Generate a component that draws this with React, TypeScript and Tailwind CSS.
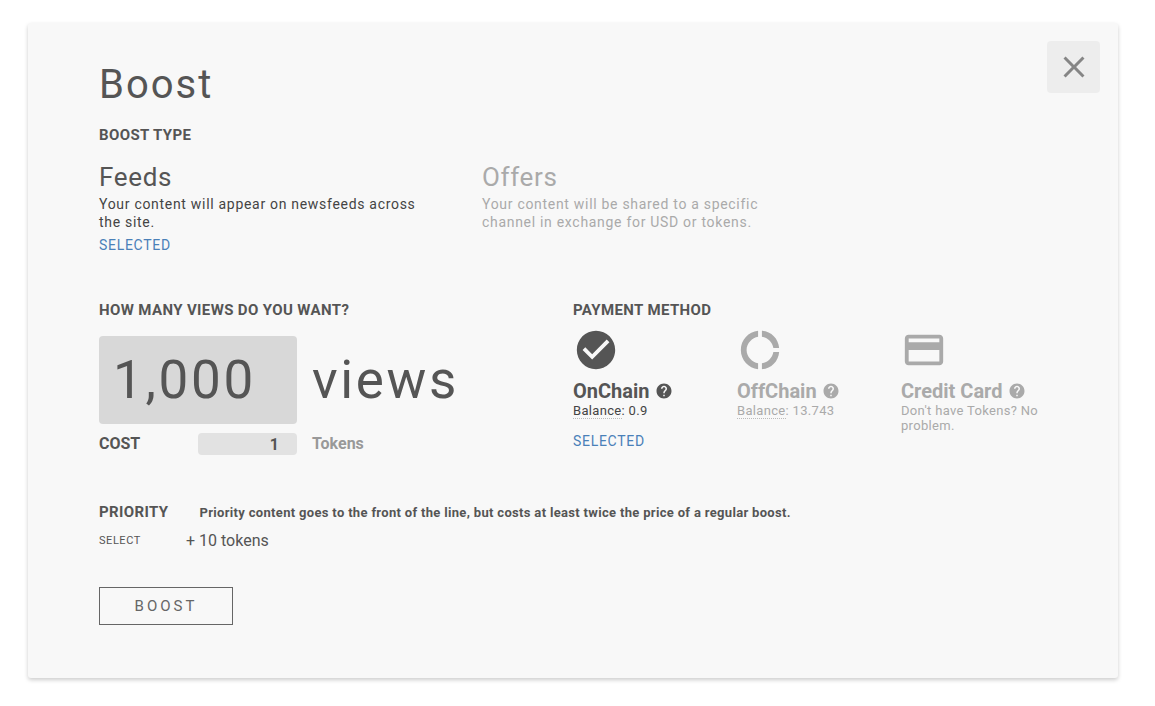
import { useState } from "react";
import type { ReactNode } from "react";
import { MdCheckCircle, MdClose, MdCreditCard, MdDonutLarge, MdHelp } from "react-icons/md";

function SectionTitle({ children }: { children: ReactNode }) {
  return <h2 className="text-[15px] leading-5 font-bold tracking-wide">{children}</h2>;
}

function SelectedMark({ className }: { className: string }) {
  return (
    <span className={`block text-sm leading-[18px] tracking-wider text-[#4a80b8] ${className}`}>
      SELECTED
    </span>
  );
}

const boostTypes = [
  { id: "feeds", name: "Feeds", text: "Your content will appear on newsfeeds across the site." },
  {
    id: "offers",
    name: "Offers",
    text: "Your content will be shared to a specific channel in exchange for USD or tokens.",
  },
];

const methods = [
  { id: "onchain", name: "OnChain", Icon: MdCheckCircle, balance: "0.9" },
  { id: "offchain", name: "OffChain", Icon: MdDonutLarge, balance: "13.743" },
  { id: "card", name: "Credit Card", Icon: MdCreditCard, balance: null },
];

export default function App() {
  const [type, setType] = useState("feeds");
  const [method, setMethod] = useState("onchain");
  const [views, setViews] = useState("1,000");
  const [cost, setCost] = useState("1");

  return (
    <main className="bg-white pt-[23px] pr-[37px] pb-7 pl-7 font-['Roboto',sans-serif] text-[#555]">
      <form
        onSubmit={(e) => e.preventDefault()}
        className="rounded-[3px] bg-[#f8f8f8] pt-[18px] pr-[18px] pb-[53px] pl-[71px] shadow-[0_2px_4px_rgba(0,0,0,0.2)]"
      >
        <header className="flex items-start justify-between">
          <h1 className="mt-5 text-[40px] leading-[48px] tracking-wider">Boost</h1>
          <button
            type="button"
            aria-label="Close"
            className="flex h-[52px] w-[53px] items-center justify-center rounded bg-[#ededed] text-[#858585]"
          >
            <MdClose className="size-9" />
          </button>
        </header>

        <div className="pr-[35px]">
          <section className="mt-4">
            <SectionTitle>BOOST TYPE</SectionTitle>
            <div className="mt-4 grid grid-cols-[383fr_383fr_200fr] items-start">
              {boostTypes.map((t) => (
                <button
                  key={t.id}
                  type="button"
                  aria-pressed={type === t.id}
                  onClick={() => setType(t.id)}
                  className={`pr-14 text-left ${type === t.id ? "text-[#444]" : "text-[#aaa]"}`}
                >
                  <span
                    className={`block text-[26px] leading-8 tracking-wide ${type === t.id ? "text-[#555]" : ""}`}
                  >
                    {t.name}
                  </span>
                  <span className="mt-0.5 block text-sm leading-[18px] tracking-wider">{t.text}</span>
                  {type === t.id && <SelectedMark className="mt-[5px]" />}
                </button>
              ))}
            </div>
          </section>

          <div className="mt-[46px] grid grid-cols-[474fr_492fr] items-start">
            <section>
              <SectionTitle>HOW MANY VIEWS DO YOU WANT?</SectionTitle>
              <div className="mt-4 flex items-center gap-[15px]">
                <input
                  id="views"
                  value={views}
                  onChange={(e) => setViews(e.target.value)}
                  className="h-[88px] w-[198px] rounded bg-[#d8d8d8] px-[14px] text-[53px] tracking-wider outline-none"
                />
                <label htmlFor="views" className="text-[53px] leading-[64px] tracking-wider">
                  views
                </label>
              </div>
              <div className="mt-[9px] flex items-center text-base leading-5 font-bold">
                <label htmlFor="cost" className="w-[99px]">
                  COST
                </label>
                <input
                  id="cost"
                  value={cost}
                  onChange={(e) => setCost(e.target.value)}
                  className="h-[22px] w-[99px] rounded bg-[#e2e2e2] pr-[18px] text-right outline-none"
                />
                <span className="ml-[15px] text-[#999]">Tokens</span>
              </div>
            </section>

            <section>
              <SectionTitle>PAYMENT METHOD</SectionTitle>
              <div className="mt-[7px] grid grid-cols-3 items-start">
                {methods.map(({ id, name, Icon, balance }) => (
                  <button
                    key={id}
                    type="button"
                    aria-pressed={method === id}
                    onClick={() => setMethod(id)}
                    className={`pr-4 text-left ${method === id ? "text-[#555]" : "text-[#aaa]"}`}
                  >
                    <Icon className="size-[46px]" />
                    <span className="mt-1.5 flex items-center gap-[5px] text-xl leading-6 font-bold">
                      {name}
                      <MdHelp className="size-[18px]" />
                    </span>
                    <span
                      className={`block text-[13px] leading-[15px] tracking-wide ${method === id ? "text-[#444]" : ""}`}
                    >
                      {balance ? (
                        <>
                          <span className="border-b border-dotted border-[#bbb]">Balance</span>: {balance}
                        </>
                      ) : (
                        "Don't have Tokens? No problem."
                      )}
                    </span>
                    {method === id && <SelectedMark className="mt-[14px]" />}
                  </button>
                ))}
              </div>
            </section>
          </div>

          <section className="mt-[47px]">
            <div className="flex items-baseline gap-[31px]">
              <SectionTitle>PRIORITY</SectionTitle>
              <p className="text-[13px] leading-5 font-bold tracking-wide">
                Priority content goes to the front of the line, but costs at least twice the price of a
                regular boost.
              </p>
            </div>
            <div className="mt-2 flex items-center">
              <button type="button" className="w-[87px] text-left text-[11px] leading-5 tracking-wider">
                SELECT
              </button>
              <span className="text-base leading-5">+ 10 tokens</span>
            </div>
          </section>

          <button
            type="submit"
            className="mt-9 block h-[38px] w-[134px] border border-[#666] text-[15px] tracking-[0.2em] text-[#666]"
          >
            BOOST
          </button>
        </div>
      </form>
    </main>
  );
}
